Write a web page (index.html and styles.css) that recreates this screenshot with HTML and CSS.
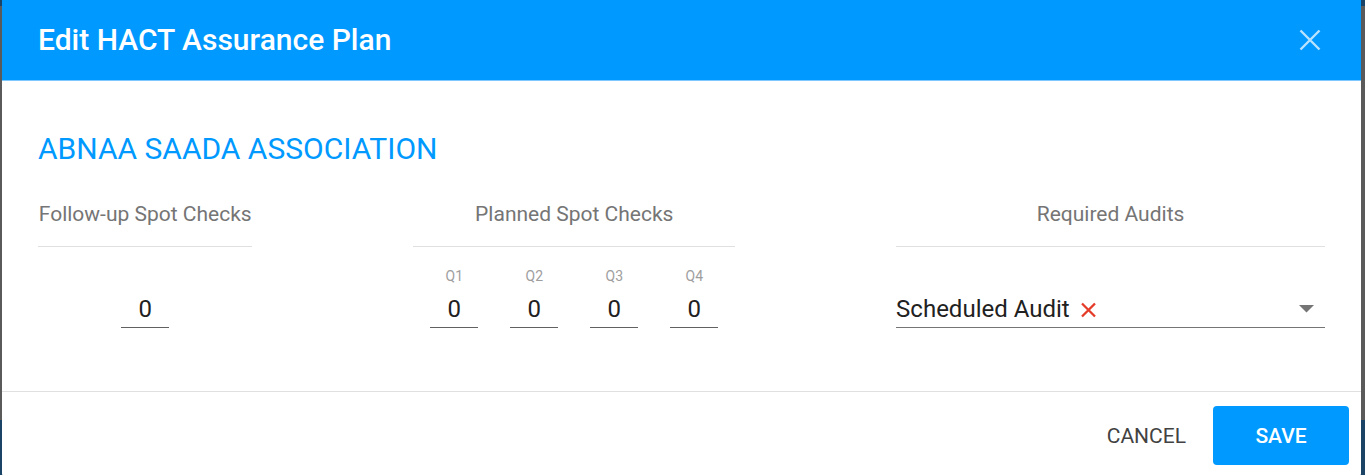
FILE: index.html
```html
<!DOCTYPE html>
<html lang="en">
<head>
<meta charset="utf-8">
<title>Edit HACT Assurance Plan</title>
<link rel="stylesheet" href="styles.css">
</head>
<body>
<div class="dialog">
  <header class="dlg-head">
    <h1 class="dlg-title">Edit HACT Assurance Plan</h1>
    <button class="close" aria-label="Close">
      <svg width="22" height="22" viewBox="0 0 22 22"><path d="M1.5 1.5 L20.5 20.5 M20.5 1.5 L1.5 20.5" stroke="currentColor" stroke-width="2.4" fill="none"/></svg>
    </button>
  </header>
  <main class="dlg-body">
    <h2 class="org">ABNAA SAADA ASSOCIATION</h2>
    <div class="cols">
      <section class="col">
        <div class="col-label">Follow-up Spot Checks</div>
        <div class="col-fields">
          <div class="num">
            <span class="q">&nbsp;</span>
            <span class="val">0</span>
          </div>
        </div>
      </section>
      <section class="col">
        <div class="col-label">Planned Spot Checks</div>
        <div class="col-fields">
          <div class="num"><span class="q">Q1</span><span class="val">0</span></div>
          <div class="num"><span class="q">Q2</span><span class="val">0</span></div>
          <div class="num"><span class="q">Q3</span><span class="val">0</span></div>
          <div class="num"><span class="q">Q4</span><span class="val">0</span></div>
        </div>
      </section>
      <section class="col">
        <div class="col-label">Required Audits</div>
        <div class="col-fields">
          <div class="select">
            <span class="chip">Scheduled Audit
              <svg class="chip-x" width="17" height="16" viewBox="0 0 17 16"><path d="M2 1.5 L15 14.5 M15 1.5 L2 14.5" stroke="currentColor" stroke-width="2.3" fill="none"/></svg>
            </span>
            <svg class="caret" width="15" height="8" viewBox="0 0 15 8"><path d="M0 0 L15 0 L7.5 7.5 Z" fill="currentColor"/></svg>
          </div>
        </div>
      </section>
    </div>
  </main>
  <footer class="dlg-foot">
    <button class="btn btn-text">CANCEL</button>
    <button class="btn btn-primary">SAVE</button>
  </footer>
</div>
</body>
</html>
```

FILE: styles.css
```css
html, body {
  margin: 0;
  padding: 0;
}
body {
  width: 1365px;
  height: 475px;
  overflow: hidden;
  background: linear-gradient(to bottom, #1b4366 0, #1b4366 6px, #5a5a5a 6px, #5a5a5a 420px, #1b4366 420px);
  font-family: Roboto, "Noto Sans", Arial, sans-serif;
}
.dialog {
  margin-left: 2px;
  width: 1359px;
  height: 477px;
  background: #fff;
  border-radius: 0 0 4px 4px;
  display: flex;
  flex-direction: column;
}
.dlg-head {
  height: 81px;
  flex: none;
  background: #0099ff;
  border-bottom: 1px solid #7cc8ff;
  box-sizing: border-box;
  display: flex;
  align-items: center;
  padding: 0 36px;
}
.dlg-title {
  margin: 0;
  flex: 1;
  color: #fff;
  font-size: 30px;
  font-weight: 500;
  line-height: 36px;
}
.close {
  border: 0;
  background: none;
  padding: 0;
  margin-right: 4px;
  color: rgba(255, 255, 255, 0.72);
  display: flex;
}
.dlg-body {
  flex: 1;
  padding: 0 36px;
}
.org {
  margin: 50px 0 0;
  font-size: 30px;
  font-weight: 400;
  line-height: 36px;
  color: #0099ff;
}
.cols {
  margin-top: 35px;
  display: grid;
  grid-template-columns: 2fr 3fr 4fr;
  column-gap: 161px;
}
.col-label {
  text-align: center;
  white-space: nowrap;
  color: #757575;
  font-size: 21px;
  line-height: 24px;
  padding-bottom: 20px;
  border-bottom: 1px solid #e0e0e0;
}
.col-fields {
  display: flex;
  justify-content: center;
  gap: 32px;
  padding-top: 21px;
}
.num {
  width: 48px;
  display: flex;
  flex-direction: column;
  align-items: center;
}
.q {
  font-size: 14px;
  line-height: 16px;
  color: #9e9e9e;
}
.val {
  margin-top: 11px;
  width: 100%;
  text-align: center;
  font-size: 24px;
  line-height: 28px;
  padding-bottom: 4px;
  color: #212121;
  border-bottom: 1px solid #616161;
}
.select {
  width: 100%;
  margin-top: 27px;
  height: 33px;
  box-sizing: border-box;
  padding-bottom: 4px;
  display: flex;
  align-items: flex-end;
  border-bottom: 1px solid #757575;
}
.chip {
  flex: 1;
  display: flex;
  align-items: center;
  gap: 10px;
  font-size: 24px;
  line-height: 28px;
  color: #212121;
}
.chip-x {
  color: #e53c2a;
  margin-top: 2px;
}
.caret {
  color: #757575;
  margin: 0 11px 10px 0;
}
.dlg-foot {
  flex: none;
  border-top: 1px solid #e0e0e0;
  display: flex;
  justify-content: flex-end;
  align-items: flex-start;
  gap: 11px;
  padding: 14px 12px 12px 0;
}
.btn {
  font-family: inherit;
  border: 0;
  border-radius: 4px;
  height: 59px;
  font-size: 21px;
  cursor: pointer;
}
.btn-text {
  background: none;
  color: #424242;
  padding: 0 16px;
}
.btn-primary {
  background: #0099ff;
  color: #fff;
  width: 136px;
  font-weight: 500;
}
```
